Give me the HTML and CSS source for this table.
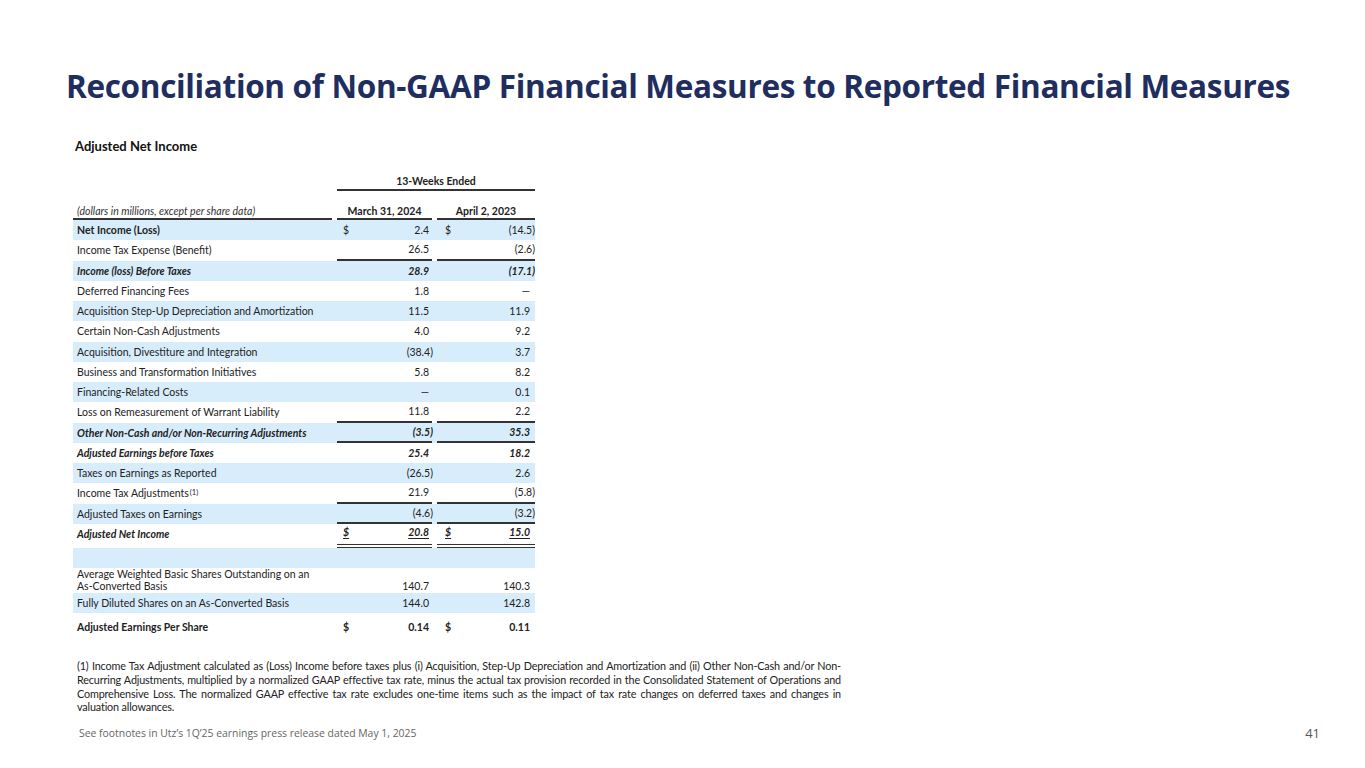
FILE: index.html
```html
<!DOCTYPE html>
<html lang="en">
<head>
<meta charset="utf-8">
<title>Reconciliation of Non-GAAP Financial Measures</title>
<link rel="stylesheet" href="styles.css">
</head>
<body>
<div class="slide">
  <h1 class="title">Reconciliation of Non-GAAP Financial Measures to Reported Financial Measures</h1>

  <div class="report">
    <div class="report-title">Adjusted Net Income</div>

    <div class="grid period-row">
      <div></div>
      <div class="period">13-Weeks Ended</div>
    </div>

    <div class="grid head-row">
      <div class="cell label it">(dollars in millions, except per share data)</div>
      <div class="cell hc">March 31, 2024</div>
      <div class="cell hc">April 2, 2023</div>
    </div>

    <div class="grid row blue">
      <div class="cell label b">Net Income (Loss)</div>
      <div class="cell v1"><span>$</span><span class="neg">2.4</span></div>
      <div class="cell v2"><span>$</span><span class="neg n">(14.5)</span></div>
    </div>
    <div class="grid row">
      <div class="cell label">Income Tax Expense (Benefit)</div>
      <div class="cell v1 ul"><span></span><span>26.5</span></div>
      <div class="cell v2 ul"><span></span><span class="n">(2.6)</span></div>
    </div>
    <div class="grid row blue bi">
      <div class="cell label">Income (loss) Before Taxes</div>
      <div class="cell v1"><span></span><span>28.9</span></div>
      <div class="cell v2"><span></span><span class="n">(17.1)</span></div>
    </div>
    <div class="grid row">
      <div class="cell label">Deferred Financing Fees</div>
      <div class="cell v1"><span></span><span>1.8</span></div>
      <div class="cell v2"><span></span><span>—</span></div>
    </div>
    <div class="grid row blue">
      <div class="cell label">Acquisition Step-Up Depreciation and Amortization</div>
      <div class="cell v1"><span></span><span>11.5</span></div>
      <div class="cell v2"><span></span><span>11.9</span></div>
    </div>
    <div class="grid row">
      <div class="cell label">Certain Non-Cash Adjustments</div>
      <div class="cell v1"><span></span><span>4.0</span></div>
      <div class="cell v2"><span></span><span>9.2</span></div>
    </div>
    <div class="grid row blue">
      <div class="cell label">Acquisition, Divestiture and Integration</div>
      <div class="cell v1"><span></span><span class="n">(38.4)</span></div>
      <div class="cell v2"><span></span><span>3.7</span></div>
    </div>
    <div class="grid row">
      <div class="cell label">Business and Transformation Initiatives</div>
      <div class="cell v1"><span></span><span>5.8</span></div>
      <div class="cell v2"><span></span><span>8.2</span></div>
    </div>
    <div class="grid row blue">
      <div class="cell label">Financing-Related Costs</div>
      <div class="cell v1"><span></span><span>—</span></div>
      <div class="cell v2"><span></span><span>0.1</span></div>
    </div>
    <div class="grid row">
      <div class="cell label">Loss on Remeasurement of Warrant Liability</div>
      <div class="cell v1 ul"><span></span><span>11.8</span></div>
      <div class="cell v2 ul"><span></span><span>2.2</span></div>
    </div>
    <div class="grid row blue bi">
      <div class="cell label">Other Non-Cash and/or Non-Recurring Adjustments</div>
      <div class="cell v1 ul"><span></span><span class="n">(3.5)</span></div>
      <div class="cell v2 ul"><span></span><span>35.3</span></div>
    </div>
    <div class="grid row bi">
      <div class="cell label">Adjusted Earnings before Taxes</div>
      <div class="cell v1"><span></span><span>25.4</span></div>
      <div class="cell v2"><span></span><span>18.2</span></div>
    </div>
    <div class="grid row blue">
      <div class="cell label">Taxes on Earnings as Reported</div>
      <div class="cell v1"><span></span><span class="n">(26.5)</span></div>
      <div class="cell v2"><span></span><span>2.6</span></div>
    </div>
    <div class="grid row">
      <div class="cell label">Income Tax Adjustments<sup>(1)</sup></div>
      <div class="cell v1 ul"><span></span><span>21.9</span></div>
      <div class="cell v2 ul"><span></span><span class="n">(5.8)</span></div>
    </div>
    <div class="grid row blue">
      <div class="cell label">Adjusted Taxes on Earnings</div>
      <div class="cell v1 ul"><span></span><span class="n">(4.6)</span></div>
      <div class="cell v2 ul"><span></span><span class="n">(3.2)</span></div>
    </div>
    <div class="grid row bi total">
      <div class="cell label">Adjusted Net Income</div>
      <div class="cell v1 dbl"><span class="tu">$</span><span class="tu">20.8</span></div>
      <div class="cell v2 dbl"><span class="tu">$</span><span class="tu">15.0</span></div>
    </div>
    <div class="grid row blue">
      <div class="cell label"></div>
      <div class="cell v1"></div>
      <div class="cell v2"></div>
    </div>
    <div class="grid row tall">
      <div class="cell label wrap">Average Weighted Basic Shares Outstanding on an As-Converted Basis</div>
      <div class="cell v1"><span></span><span>140.7</span></div>
      <div class="cell v2"><span></span><span>140.3</span></div>
    </div>
    <div class="grid row blue">
      <div class="cell label">Fully Diluted Shares on an As-Converted Basis</div>
      <div class="cell v1"><span></span><span>144.0</span></div>
      <div class="cell v2"><span></span><span>142.8</span></div>
    </div>
    <div class="grid row eps b">
      <div class="cell label">Adjusted Earnings Per Share</div>
      <div class="cell v1"><span>$</span><span>0.14</span></div>
      <div class="cell v2"><span>$</span><span>0.11</span></div>
    </div>
  </div>

  <p class="footnote">(1) Income Tax Adjustment calculated as (Loss) Income before taxes plus (i) Acquisition, Step-Up Depreciation and Amortization and (ii) Other Non-Cash and/or Non-Recurring Adjustments, multiplied by a normalized GAAP effective tax rate, minus the actual tax provision recorded in the Consolidated Statement of Operations and Comprehensive Loss. The normalized GAAP effective tax rate excludes one-time items such as the impact of tax rate changes on deferred taxes and changes in valuation allowances.</p>

  <div class="bottom">
    <span class="source">See footnotes in Utz’s 1Q’25 earnings press release dated May 1, 2025</span>
    <span class="page">41</span>
  </div>
</div>
</body>
</html>
```

FILE: styles.css
```css
* { box-sizing: border-box; }
html, body { margin: 0; padding: 0; background: #fff; }
.slide {
  width: 1365px;
  height: 768px;
  position: relative;
  padding: 64px 0 0 0;
  font-family: Lato, "Liberation Sans", sans-serif;
  color: #222;
}
.title {
  margin: 0 0 0 66px;
  font-family: "Open Sans", "Liberation Sans", sans-serif;
  font-weight: 700;
  font-size: 31.5px;
  line-height: 44px;
  letter-spacing: -0.33px;
  color: #1f2d5f;
  white-space: nowrap;
}
.report {
  margin: 30px 0 0 73px;
  width: 462px;
  font-size: 10.5px;
}
.report-title {
  font-weight: 700;
  font-size: 13px;
  color: #111;
  margin-left: 2px;
  height: 25px;
}
.grid {
  display: grid;
  grid-template-columns: 259px 95px 98px;
  column-gap: 5px;
}
.period-row { height: 28px; align-items: end; }
.period {
  grid-column: 2 / 4;
  text-align: center;
  font-weight: 700;
  border-bottom: 2px solid #333;
  padding-bottom: 0;
  height: 17px;
  line-height: 14px;
}
.head-row { height: 27px; margin-top: 2px; }
.head-row .cell {
  border-bottom: 2px solid #333;
  display: flex;
  align-items: flex-end;
  padding-bottom: 1px;
}
.head-row .hc { justify-content: center; font-weight: 700; }
.cell { height: 100%; }
.label { padding-left: 4px; display: flex; align-items: center; white-space: nowrap; }
.it { font-style: italic; color: #333; }
.b { font-weight: 700; }
.bi { font-weight: 700; font-style: italic; }
.row { height: 20.25px; }
.row.blue { background: #d8edfb; }
.row.total { height: 24px; }
.row.total .cell { padding-bottom: 3px; }
.row.tall { height: 25px; }
.row.tall .cell { align-items: flex-end; padding-bottom: 3px; }
.row.tall .label { padding-bottom: 3px; }
.row.eps { height: 27px; }
.v1, .v2 {
  display: flex;
  justify-content: space-between;
  align-items: center;
}
.v1 { padding: 0 3px 0 6px; }
.v2 { padding: 0 5px 0 8px; }
.v1 .n { margin-right: -4px; }
.v2 .n { margin-right: -5px; }
.ul { border-bottom: 2px solid #333; }
.dbl { border-bottom: 4px double #333; }
.tu { text-decoration: underline; text-underline-offset: 2px; }
.wrap { white-space: normal; line-height: 12px; padding-right: 20px; }
sup { font-size: 7.5px; line-height: 0; vertical-align: 4px; margin-left: 1px; }
.footnote {
  margin: 19px 0 0 77px;
  width: 764px;
  font-size: 10.8px;
  line-height: 13.7px;
  text-align: justify;
  color: #222;
  letter-spacing: -0.15px;
}
.bottom {
  position: absolute;
  left: 79px;
  right: 45px;
  top: 724px;
  display: flex;
  justify-content: space-between;
  align-items: center;
}
.source {
  font-family: "Open Sans", sans-serif;
  font-size: 10.4px;
  color: #666;
}
.page {
  font-family: "Open Sans", sans-serif;
  font-size: 13px;
  color: #555;
}
```
